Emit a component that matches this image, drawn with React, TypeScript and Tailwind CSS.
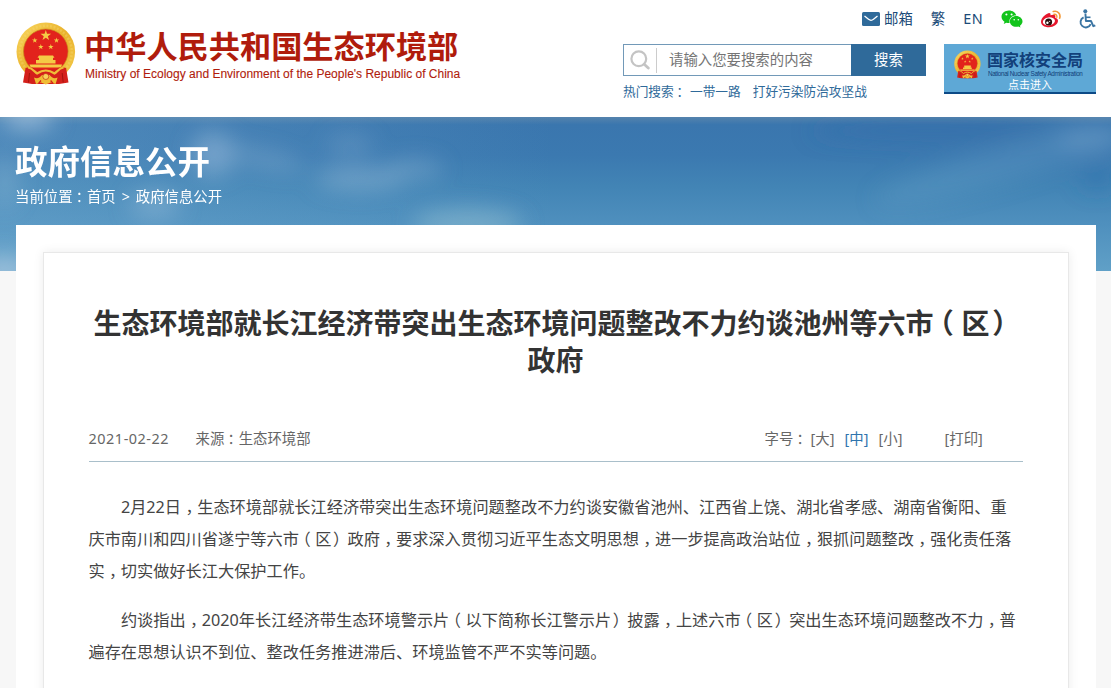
import React, { Fragment } from 'react';
import { FaWeixin } from 'react-icons/fa';

function Han({ children }: { children: string }) {
  const parts = children.split(/([，：（）])/);
  return (
    <>
      {parts.map((part, i) => {
        if (part === '，') {
          return (
            <span key={i} className="pl-[0.27em] pr-[0.23em] [font-feature-settings:'halt']">
              {part}
            </span>
          );
        }
        if (part === '）') {
          return (
            <span key={i} className="pl-[0.1em] pr-[0.4em] [font-feature-settings:'halt']">
              {part}
            </span>
          );
        }
        if (part === '：' || part === '（') {
          return (
            <span key={i} className="pl-[0.22em] pr-[0.28em] [font-feature-settings:'halt']">
              {part}
            </span>
          );
        }
        return <Fragment key={i}>{part}</Fragment>;
      })}
    </>
  );
}

const STAR = 'M0-1 .225-.309 .951-.309 .363.118 .588.809 0 .382-.588.809-.363.118-.951-.309-.225-.309Z';

function Emblem({ className, id }: { className: string; id: string }) {
  return (
    <svg viewBox="0 0 60 63" className={className} aria-hidden="true">
      <defs>
        <linearGradient id={id} x1="0" y1="0" x2="1" y2="1">
          <stop offset="0" stopColor="#f9d862" />
          <stop offset="0.5" stopColor="#eab22c" />
          <stop offset="1" stopColor="#f3cb4c" />
        </linearGradient>
      </defs>
      <circle cx="29.800" cy="29.800" r="29.300" fill={`url(#${id})`} />
      <circle cx="29.800" cy="29.800" r="26" fill="none" stroke="#f7dc78" strokeWidth="2.500" strokeDasharray="2 1.600" opacity="0.35" />
      <circle cx="29.800" cy="29.300" r="22.300" fill="#e2231c" stroke="#c98b1c" strokeWidth="0.700" />
      <g fill="#f4cb45">
        <path d={STAR} transform="translate(29.800 13.500) scale(5.600)" />
        <path d={STAR} transform="translate(18.800 18.500) scale(2.900)" />
        <path d={STAR} transform="translate(40.500 18.500) scale(2.900)" />
        <path d={STAR} transform="translate(24.800 25) scale(2.900)" />
        <path d={STAR} transform="translate(34.800 25) scale(2.900)" />
        <path d="M23 33.500h14l1.500 2.300H37v2.200h2.500v3.500h-19.500v-3.500H23v-2.200h-1.500z" />
        <path d="M13.500 42.500h32.600l-1.200 3H14.800z" />
      </g>
      <path d="M9.500 46c4-1.500 7.500-1 10 1.500 3.500-1.500 6.500.5 10.300.5s6.800-2 10.300-.5c2.500-2.500 6-3 10-1.500l2.400 14.500-9.500 1.500H16L7 60.500z" fill="#d4201b" />
      <path d="M12 45.500c4 .5 6 3.500 9 6 3-2 5.500-3 8.800-3s5.800 1 8.800 3c3-2.500 5-5.500 9-6" fill="none" stroke="#efbd38" strokeWidth="2.200" />
      <path d="M18 55.500c3 1.500 6 .500 8-2.500h7.600c2 3 5 4 8 2.500l-2 6.500-5-1.500-4.800 2-4.800-2-5 1.500z" fill="#f0bd36" />
      <circle cx="29.800" cy="54.500" r="3" fill="#f6d25a" stroke="#c3140f" strokeWidth="0.600" />
      <path d="M25 58.500l-2.500 3M34.600 58.500l2.500 3" stroke="#d4201b" strokeWidth="1.200" />
      <path d="M13.500 51l-1 9.500M46.200 51l1 9.500" stroke="#a5120d" strokeWidth="1" />
    </svg>
  );
}

function MailIcon() {
  return (
    <svg viewBox="0 0 18 14" className="h-[14px] w-[18px]" aria-hidden="true">
      <rect width="18" height="14" rx="1.500" fill="#2f6a9a" />
      <path d="M2.500 4 6.500 7.300Q9 9.300 11.500 7.300L15.500 4" fill="none" stroke="#fff" strokeWidth="1.300" />
    </svg>
  );
}

function WeiboIcon() {
  return (
    <svg viewBox="0 0 21 18" className="h-[18px] w-[21px]" aria-hidden="true">
      <path
        d="M7.500 3.200c1.500-.4 2.500.6 1.900 2.100 2.500-1 5.300-.9 5 1.500l-.2 1c1.600.5 2.800 1.300 2.800 3 0 3.500-4.200 6.400-9.100 6.400C3.200 17.200 0 15 0 11.700 0 8.200 4.200 4.100 7.500 3.200z"
        fill="#e6162d"
      />
      <ellipse cx="7.900" cy="11.400" rx="6.100" ry="4" fill="#fff" transform="rotate(-8 7.900 11.400)" />
      <circle cx="7.600" cy="11.900" r="3.500" fill="#2a0d0d" />
      <circle cx="6.400" cy="12.800" r="1.200" fill="#fff" />
      <circle cx="8.700" cy="11.300" r="0.600" fill="#fff" />
      <path d="M12.300 1.500c4.300-1.200 7.600 2.300 6.400 6.600" fill="none" stroke="#f39a3a" strokeWidth="1.700" strokeLinecap="round" />
      <path d="M13 4.300c2-.4 3.400 1 2.800 3" fill="none" stroke="#f39a3a" strokeWidth="1.400" strokeLinecap="round" />
    </svg>
  );
}

function WheelchairIcon() {
  return (
    <svg viewBox="0 0 18 20" className="h-5 w-[18px]" fill="none" stroke="#3b75a3" aria-hidden="true">
      <circle cx="7.300" cy="2.300" r="2" fill="#3b75a3" stroke="none" />
      <path d="M7.400 4.500 7.900 12H13l2.300 5.200 2-.9" strokeWidth="1.900" strokeLinejoin="round" />
      <path d="M7.700 8.300H12.500" strokeWidth="1.600" />
      <path d="M5.600 8.300A5.300 5.300 0 1 0 12.700 15.200" strokeWidth="1.900" />
    </svg>
  );
}

function SearchIcon() {
  return (
    <svg viewBox="0 0 20 20" className="h-5 w-5" aria-hidden="true">
      <circle cx="8.800" cy="8.800" r="7.400" fill="none" stroke="#c4c4c4" strokeWidth="2.200" />
      <path d="M14.200 14.200 18.300 18" stroke="#c4c4c4" strokeWidth="2.800" strokeLinecap="round" />
    </svg>
  );
}

function Sky() {
  return (
    <svg viewBox="0 0 1111 154" preserveAspectRatio="none" className="absolute inset-0 h-full w-full" aria-hidden="true">
      <defs>
        <linearGradient id="sky" x1="0" y1="0" x2="0" y2="1">
          <stop offset="0" stopColor="#5583ad" />
          <stop offset="0.05" stopColor="#3a76ae" />
          <stop offset="0.25" stopColor="#3b79b0" />
          <stop offset="0.45" stopColor="#4284b5" />
          <stop offset="0.7" stopColor="#4f90be" />
          <stop offset="1" stopColor="#60a0c7" />
        </linearGradient>
        <linearGradient id="haze" x1="0" y1="0" x2="1" y2="0">
          <stop offset="0" stopColor="#7db4d6" stopOpacity="0.3" />
          <stop offset="0.5" stopColor="#7db4d6" stopOpacity="0" />
        </linearGradient>
        <filter id="soft" x="-50%" y="-100%" width="200%" height="300%">
          <feGaussianBlur stdDeviation="11" />
        </filter>
      </defs>
      <rect width="1111" height="154" fill="url(#sky)" />
      <rect width="1111" height="154" fill="url(#haze)" />
      <g filter="url(#soft)" fill="#a9c6df">
        <ellipse cx="28" cy="0" rx="26" ry="12" opacity="0.75" />
        <ellipse cx="213" cy="37" rx="22" ry="22" opacity="0.45" />
        <ellipse cx="265" cy="42" rx="40" ry="8" opacity="0.3" transform="rotate(12 265 42)" />
        <ellipse cx="360" cy="62" rx="45" ry="11" opacity="0.4" />
        <ellipse cx="415" cy="52" rx="28" ry="10" opacity="0.3" />
        <ellipse cx="350" cy="28" rx="24" ry="12" opacity="0.2" />
        <ellipse cx="155" cy="88" rx="26" ry="15" opacity="0.35" />
        <ellipse cx="468" cy="107" rx="55" ry="15" fill="#9cc6d4" opacity="0.5" />
        <ellipse cx="5" cy="65" rx="14" ry="26" opacity="0.25" />
        <ellipse cx="4" cy="154" rx="28" ry="14" opacity="0.8" />
        <ellipse cx="1000" cy="48" rx="130" ry="18" fill="#6aa6cb" opacity="0.28" transform="rotate(-16 1000 48)" />
        <ellipse cx="1090" cy="22" rx="35" ry="12" opacity="0.22" />
        <ellipse cx="1097" cy="60" rx="16" ry="12" fill="#2f6fad" opacity="0.6" />
        <ellipse cx="930" cy="14" rx="120" ry="8" fill="#336aa8" opacity="0.5" />
      </g>
    </svg>
  );
}

function Header() {
  return (
    <header className="flex h-[117px] justify-between bg-white pl-4 pr-[15px]">
      <div className="flex pt-[22px]">
        <Emblem id="gold-main" className="h-[63px] w-[60px]" />
        <div className="ml-[8px] flex flex-col pt-[5px] text-[#b01c0c]">
          <div className="text-[31.2px] font-bold leading-[38px]">中华人民共和国生态环境部</div>
          <div className="ml-px mt-[2px] whitespace-nowrap font-['Liberation_Sans',sans-serif] text-[12px] leading-[14px] [-webkit-text-stroke:0.1px_#b01c0c]">
            Ministry of Ecology and Environment of the People's Republic of China
          </div>
        </div>
      </div>
      <div className="flex w-[473px] flex-col">
        <div className="mt-[8px] flex h-[22px] items-center justify-end text-[14.400px] text-[#1b4b78]">
          <MailIcon />
          <a className="ml-1">邮箱</a>
          <a className="ml-[18px]">繁</a>
          <a className="ml-[18px] tracking-[0.4px]">EN</a>
          <FaWeixin className="ml-[18px] h-[22px] w-[22px] text-[#12c41c]" />
          <span className="ml-[18px]"><WeiboIcon /></span>
          <span className="ml-[16px]"><WheelchairIcon /></span>
        </div>
        <div className="mt-[14px] flex justify-between">
          <div className="w-[303px]">
            <div className="flex h-8">
              <div className="flex flex-1 items-center border border-r-0 border-[#7299b8] pl-[6px]">
                <SearchIcon />
                <span className="ml-[6px] h-[25px] w-px bg-[#cccccc]" />
                <span className="ml-[12px] text-[14.400px] leading-none text-[#757575]">请输入您要搜索的内容</span>
              </div>
              <button className="w-[75px] bg-[#2f6a9a] text-[14.400px] text-white">搜索</button>
            </div>
            <div className="mt-[5px] flex whitespace-nowrap text-[12.700px] leading-5 text-[#2f6a9a]">
              <span className="w-[67px]"><Han>热门搜索：</Han></span>
              <a>一带一路</a>
              <a className="ml-3">打好污染防治攻坚战</a>
            </div>
          </div>
          <a className="flex h-[50px] w-[152px] border-b-2 border-[#0d4a86] bg-[#5ea8d6] pl-[10px]">
            <Emblem id="gold-small" className="mt-[6px] h-[29px] w-[27px]" />
            <span className="ml-[6px] flex flex-col items-start whitespace-nowrap">
              <span className="mt-[6px] text-[16px] font-bold leading-5 text-[#12407a]">国家核安全局</span>
              <span className="ml-px font-['Liberation_Sans',sans-serif] text-[6.300px] leading-[8px] tracking-[-0.34px] text-[#12407a]">
                National Nuclear Safety Administration
              </span>
              <span className="ml-[21px] text-[11px] leading-[13px] text-white">点击进入</span>
            </span>
          </a>
        </div>
      </div>
    </header>
  );
}

function Banner() {
  return (
    <section className="relative h-[154px] overflow-hidden bg-[#4284b5] text-white">
      <Sky />
      <div className="relative pl-[15px] pt-[24px]">
        <h2 className="text-[32.500px] font-bold leading-[42px]">政府信息公开</h2>
        <p className="mt-[3px] text-[14.400px] leading-[22px]">
          <Han>当前位置：</Han>首页<span className="mx-[5px] inline-block w-[10px] text-center">&gt;</span>政府信息公开
        </p>
      </div>
    </section>
  );
}

function ArticleMeta() {
  return (
    <div className="mt-[48px] flex h-[35px] items-start border-b border-[#a9bfca] text-[14.400px] leading-6 text-[#666666]">
      <span className="w-[107px] tracking-[0.55px]">2021-02-22</span>
      <span><Han>来源：生态环境部</Han></span>
      <span className="ml-auto w-[46px]"><Han>字号：</Han></span>
      <a className="w-[34px]">[大]</a>
      <a className="w-[34px] text-[#2f74ad]">[中]</a>
      <a className="w-[66px]">[小]</a>
      <a className="w-[78px]">[打印]</a>
    </div>
  );
}

const PARAGRAPHS = [
  [
    '2月22日，生态环境部就长江经济带突出生态环境问题整改不力约谈安徽省池州、江西省上饶、湖北省孝感、湖南省衡阳、重',
    '庆市南川和四川省遂宁等六市（区）政府，要求深入贯彻习近平生态文明思想，进一步提高政治站位，狠抓问题整改，强化责任落',
    '实，切实做好长江大保护工作。',
  ],
  [
    '约谈指出，2020年长江经济带生态环境警示片（以下简称长江警示片）披露，上述六市（区）突出生态环境问题整改不力，普',
    '遍存在思想认识不到位、整改任务推进滞后、环境监管不严不实等问题。',
  ],
];

export default function App() {
  return (
    <div className="h-[688px] w-[1111px] overflow-hidden bg-[#f7f7f7] font-['Noto_Sans','Noto_Sans_CJK_SC',sans-serif]">
      <Header />
      <Banner />
      <main className="relative mx-auto -mt-[46px] h-[600px] w-[1080px] bg-white px-[27px] pt-[27px]">
        <article className="h-[700px] border border-[#e8e8e8] bg-white px-[45px] pt-[52px] shadow-[0_0_10px_rgba(0,0,0,0.08)]">
          <h1 className="-mx-2 text-center text-[28px] font-bold leading-[37px] text-[#333333]">
            <Han>生态环境部就长江经济带突出生态环境问题整改不力约谈池州等六市（区）</Han>
            <br />
            政府
          </h1>
          <ArticleMeta />
          <div className="mt-[29px] whitespace-nowrap text-[16.200px] leading-8 text-[#444444]">
            {PARAGRAPHS.map((lines, i) => (
              <p key={i} className="mb-[17px] indent-[32.400px]">
                {lines.map((line, j) => (
                  <Fragment key={j}>
                    {j > 0 && <br />}
                    <Han>{line}</Han>
                  </Fragment>
                ))}
              </p>
            ))}
          </div>
        </article>
      </main>
    </div>
  );
}
